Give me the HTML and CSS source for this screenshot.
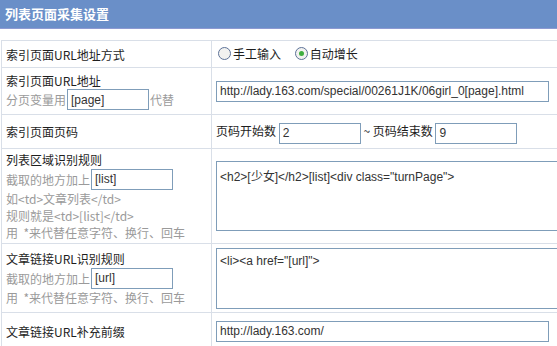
FILE: index.html
```html
<!DOCTYPE html>
<html lang="zh-CN">
  <head>
    <meta charset="UTF-8" />
    <title>列表页面采集设置</title>
    <link rel="stylesheet" href="styles.css">
  </head>
  <body>
    <div class="head">列表页面采集设置</div>

    <table class="form">
      <tr class="r1">
        <td class="label">索引页面URL地址方式</td>
        <td class="field">
          <label class="radio"><span class="dot"></span>手工输入</label>
          <label class="radio"><span class="dot on"></span>自动增长</label>
        </td>
      </tr>
      <tr class="r2">
        <td class="label">
          <div class="title">索引页面URL地址</div>
          <div class="hint row">分页变量用<input class="small" value="[page]">代替</div>
        </td>
        <td class="field">
          <input class="long" value="http://lady.163.com/special/00261J1K/06girl_0[page].html">
        </td>
      </tr>
      <tr class="r3">
        <td class="label">索引页面页码</td>
        <td class="field pages">
          页码开始数 <input class="num" value="2"> ~ 页码结束数 <input class="num" value="9">
        </td>
      </tr>
      <tr class="r4">
        <td class="label">
          <div class="title">列表区域识别规则</div>
          <div class="hint row">截取的地方加上<input class="small" value="[list]"></div>
          <div class="hint">如&lt;td&gt;文章列表&lt;/td&gt;</div>
          <div class="hint">规则就是&lt;td&gt;[list]&lt;/td&gt;</div>
          <div class="hint">用 &nbsp;*来代替任意字符、换行、回车</div>
        </td>
        <td class="field">
          <textarea class="area">&lt;h2&gt;[少女]&lt;/h2&gt;[list]&lt;div class="turnPage"&gt;</textarea>
        </td>
      </tr>
      <tr class="r5">
        <td class="label">
          <div class="title">文章链接URL识别规则</div>
          <div class="hint row">截取的地方加上<input class="small" value="[url]"></div>
          <div class="hint">用 &nbsp;*来代替任意字符、换行、回车</div>
        </td>
        <td class="field">
          <textarea class="area">&lt;li&gt;&lt;a href="[url]"&gt;</textarea>
        </td>
      </tr>
      <tr class="r6">
        <td class="label">文章链接URL补充前缀</td>
        <td class="field">
          <input class="long" value="http://lady.163.com/">
        </td>
      </tr>
    </table>
  </body>
</html>
```

FILE: styles.css
```css
body {
  margin: 0;
  background: #fff;
  color: #1e1e1e;
  font: 12px "Noto Sans CJK SC", "DejaVu Sans", sans-serif;
  overflow: hidden;
}
.head {
  height: 28px;
  line-height: 28px;
  padding-left: 5px;
  background: #6a8fc8;
  border-bottom: 1px solid #8d9ad2;
  color: #fff;
  font-size: 13px;
  font-weight: bold;
  margin-bottom: 11px;
}
.form {
  width: 640px;
  border-collapse: collapse;
  border-top: 1px solid #8b909c;
  margin-left: 1px;
}
.form td {
  border: 1px solid #d9dfe8;
  vertical-align: middle;
  padding: 0 4px;
}
.label {
  width: 201px;
  line-height: 17px;
}
.hint {
  color: #9a9a9a;
  line-height: 17px;
}
.row {
  display: flex;
  align-items: center;
  height: 22px;
}
input, textarea {
  font: 12px "Liberation Sans", Arial, sans-serif;
  color: #333;
  border: 1px solid #7f9db9;
  margin: 0;
  padding: 1px 3px;
  box-sizing: border-box;
}
.small {
  width: 82px;
  height: 21px;
  margin: 0 1px;
}
.long {
  display: block;
  width: 333px;
  height: 21px;
}
.num {
  width: 82px;
  height: 21px;
  vertical-align: middle;
}
.area {
  display: block;
  width: 400px;
  resize: none;
  padding: 5px 3px;
}
.r1 td { height: 26px; }
.r2 td { height: 46px; }
.r3 td { height: 30px; }
.r4 td { height: 94px; }
.r5 td { height: 68px; }
.r6 td { height: 36px; }
.r4 .area { height: 70px; }
.r5 .area { height: 61px; }
.r3 .pages { padding-top: 3px; }
.radio {
  margin-right: 9px;
  display: inline-flex;
  align-items: center;
}
.dot {
  width: 11px;
  height: 11px;
  border: 1px solid #5d7298;
  border-radius: 50%;
  background: #f2f2f0;
  margin: 0 2px 0 2px;
  position: relative;
}
.dot.on::after {
  content: "";
  position: absolute;
  left: 3px;
  top: 3px;
  width: 5px;
  height: 5px;
  border-radius: 50%;
  background: #3fae3f;
}
```
